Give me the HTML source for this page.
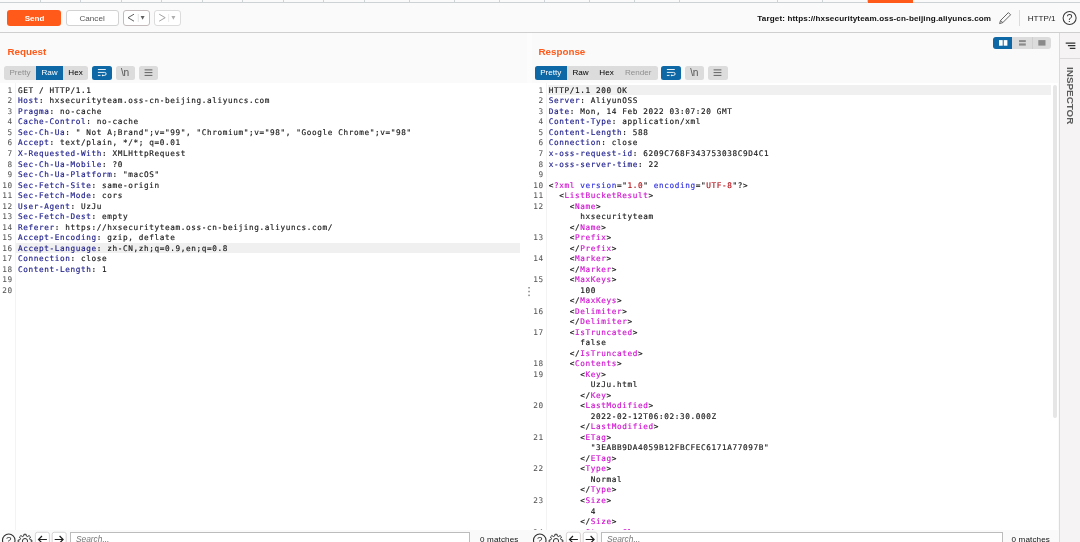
<!DOCTYPE html>
<html lang="en">
<head>
<meta charset="utf-8">
<title>Burp Suite Repeater</title>
<style>
html,body{margin:0;padding:0;}
body{width:1080px;height:542px;overflow:hidden;position:relative;background:#fafafa;font-family:"Liberation Sans",sans-serif;color:#222;}
#root{position:absolute;left:0;top:0;width:1080px;height:542px;will-change:transform;}
.abs{position:absolute;}
#tabstrip{left:0;top:0;width:1080px;height:3px;background:#fafafa;}
#tabstrip .hline{position:absolute;left:0;top:2px;width:1080px;height:1px;background:#cdd3d5;}
#tabstrip .v{position:absolute;top:0;width:1px;height:3px;background:#cfd4d6;}
#tabstrip .sel{position:absolute;left:868px;top:0;width:45px;height:3px;background:#ff5a1a;}
#toolbar{left:0;top:3px;width:1080px;height:30px;background:#fafafa;border-bottom:1px solid #cfcfcf;box-sizing:border-box;}
.btn{position:absolute;top:10.3px;height:15.3px;box-sizing:border-box;border-radius:2.5px;font-size:8.1px;line-height:14px;text-align:center;}
#send{left:7.3px;width:54px;background:#ff5a1a;color:#fff;font-weight:bold;line-height:17.6px;top:10.3px;height:15.3px;border-radius:3px;text-indent:0.5px;}
#cancel{left:65.5px;width:53.2px;top:10.3px;height:15.3px;border-radius:3px;line-height:15px;background:#fff;border:1px solid #d2d2d2;color:#555;}
.nav{background:#fff;border:1px solid #c4bcbc;width:26.7px;border-radius:3px;}
.nav.dis{border-color:#dcdcdc;}
.pane-title{position:absolute;font-weight:bold;font-size:9.8px;color:#ff5a1a;line-height:12px;}
.seg{position:absolute;top:66px;height:13.5px;background:#dcdcdc;border-radius:2.5px;overflow:hidden;font-size:8.1px;line-height:14.3px;color:#000;}
.seg span{position:absolute;top:0;height:13.5px;text-align:center;}
.seg .on{background:#0e68a6;color:#fff;}
.seg .dis{color:#8f8f8f;}
.ib{position:absolute;top:66px;height:13.6px;width:19.5px;border-radius:2.5px;background:#dcdcdc;}
.ib.on{background:#0e68a6;}
.ib svg{position:absolute;left:0;top:0;}
.editor{position:absolute;top:83px;padding-top:1.8px;box-sizing:border-box;background:#fff;overflow:hidden;font-family:"DejaVu Sans Mono","Liberation Mono",monospace;font-size:7.7px;letter-spacing:0.623px;-webkit-text-stroke:0.17px;color:#1a1a1a;}
.editor .gut{position:absolute;left:0;top:0;bottom:0;background:#fff;border-right:1px solid #f3f3f3;box-sizing:border-box;}
.ln{position:relative;height:10.526px;line-height:10.526px;white-space:pre;}
.ln .no{position:absolute;left:0;top:1.1px;text-align:right;color:#585858;-webkit-text-stroke:0.06px;}
.ln .tx{position:absolute;top:1.1px;}
.ln.hl::before{content:"";position:absolute;top:0;bottom:0;right:0;background:#f0f0f0;}
#resp .ln.hl::before{right:7px;}
.h{color:#1c1c8a;}
.t{color:#d012d0;}
.s{color:#b3141c;}
.a{color:#3333e0;}
#req{left:0;width:520px;height:447px;}
#req .gut{width:16px;}
#req .no{width:12.8px;}
#req .tx{left:18px;}
#req .ln.hl::before{left:16px;}
#resp{left:531px;width:527px;height:447px;}
#edbg{left:0;top:83px;width:1058px;height:447px;background:#fff;}
#split{left:527px;top:33px;width:4.5px;height:50px;background:#fcfcfc;}
.dots i{position:absolute;left:528.3px;width:1.5px;height:1.5px;background:#8c8c8c;}
.sb{position:absolute;right:0.6px;top:1.9px;width:4.3px;height:333.5px;border-radius:2.2px;background:#e6e6e6;}
#resp .gut{width:16px;}
#resp .no{width:12.7px;}
#resp .tx{left:17.7px;}
#resp .ln.hl::before{left:16.5px;}
.foot{position:absolute;top:529px;height:13px;}
.search{position:absolute;top:531.5px;height:14px;background:#fff;border:1px solid #bcbcbc;box-sizing:border-box;font-size:8.4px;font-style:italic;color:#787878;line-height:13.5px;padding-left:4.6px;}
.matches{position:absolute;top:534.5px;font-size:8.1px;letter-spacing:0.13px;color:#111;line-height:10px;}
#inspector{left:1059px;top:33px;width:21px;height:509px;background:#f5f3f3;border-left:1px solid #dcdada;box-sizing:border-box;}
</style>
</head>
<body>
<div id="root">
<div id="tabstrip" class="abs">
<div class="hline"></div><div style="position:absolute;left:943px;top:1px;width:137px;height:1px;background:#fafafa"></div>
<i class="v" style="left:40px"></i><i class="v" style="left:80px"></i><i class="v" style="left:121px"></i><i class="v" style="left:161px"></i><i class="v" style="left:202px"></i><i class="v" style="left:242px"></i><i class="v" style="left:283px"></i><i class="v" style="left:323px"></i><i class="v" style="left:364px"></i><i class="v" style="left:409px"></i><i class="v" style="left:454px"></i><i class="v" style="left:499px"></i><i class="v" style="left:544px"></i><i class="v" style="left:589px"></i><i class="v" style="left:634px"></i><i class="v" style="left:679px"></i><i class="v" style="left:777px"></i><i class="v" style="left:822px"></i><i class="v" style="left:867px"></i><i class="v" style="left:912px"></i>
<div class="sel"></div>
</div>
<div id="toolbar" class="abs"></div>
<div class="btn" id="send">Send</div>
<div class="btn" id="cancel">Cancel</div>
<div class="btn nav" style="left:123px"><svg width="27" height="16" viewBox="0 0 27 16" style="position:absolute;left:-1.7px;top:-1.5px"><path d="M12 4.2 L6 7.7 L12 11.2" fill="none" stroke="#606060" stroke-width="1"/><path d="M16.3 4 V12" stroke="#dedede" stroke-width="0.8"/><path d="M18.6 6 H22.6 L20.6 9.8 Z" fill="#606060"/></svg></div>
<div class="btn nav dis" style="left:154px"><svg width="27" height="16" viewBox="0 0 27 16" style="position:absolute;left:-1.7px;top:-1.5px"><path d="M6.2 4.2 L12.2 7.7 L6.2 11.2" fill="none" stroke="#a2a2a2" stroke-width="1"/><path d="M15.6 4 V12" stroke="#e4e4e4" stroke-width="0.8"/><path d="M18.4 6 H22.4 L20.4 9.8 Z" fill="#b0b0b0"/></svg></div>
<div class="abs" style="left:757.3px;top:12.5px;font-size:8.1px;font-weight:bold;color:#111;line-height:12px;white-space:nowrap;letter-spacing:0.135px;">Target: https://hxsecurityteam.oss-cn-beijing.aliyuncs.com</div>
<div class="abs" style="left:1027.7px;top:12.5px;font-size:8.1px;color:#222;line-height:12px;">HTTP/1</div>
<div class="abs" style="left:1019px;top:10px;width:1px;height:15.5px;background:#dcdcdc;"></div>
<svg class="abs" style="left:997px;top:10px" width="16" height="16" viewBox="0 0 16 16"><path d="M2.6 13.6 L3.6 10.4 L11.4 2.6 L13.6 4.8 L5.8 12.6 Z M3.6 10.4 L5.8 12.6" fill="none" stroke="#555" stroke-width="0.9" stroke-linejoin="round"/></svg>
<svg class="abs" style="left:1061px;top:10px" width="17" height="17" viewBox="0 0 17 17"><circle cx="8.6" cy="8" r="6.5" fill="none" stroke="#3a3a3a" stroke-width="1.05"/><text x="8.6" y="11.9" font-family="Liberation Sans, sans-serif" font-size="10.8" text-anchor="middle" fill="#3a3a3a">?</text></svg>

<div class="pane-title" style="left:7.5px;top:45.7px;">Request</div>
<div class="seg" style="left:4px;width:84px;"><span class="dis" style="left:0;width:32px;">Pretty</span><span class="on" style="left:32px;width:27px;">Raw</span><span style="left:59px;width:25px;">Hex</span></div>
<div class="ib on" style="left:92.1px"><svg width="20" height="14" viewBox="0 0 20 14"><path d="M5.9 3.5 H13.8 M5.9 6.4 H12.6 A1.5 1.5 0 0 1 12.6 9.4 H10.2 M5.9 9.4 H8.5" fill="none" stroke="#fff" stroke-width="0.9"/><path d="M11 8.3 L9.7 9.4 L11 10.5 Z" fill="#fff" stroke="none"/></svg></div>
<div class="ib" style="left:115.5px"><span style="position:absolute;left:0;width:19px;top:0;text-align:center;font-size:10.2px;line-height:13.5px;color:#555;letter-spacing:-0.3px">\n</span></div>
<div class="ib" style="left:138.7px"><svg width="20" height="14" viewBox="0 0 20 14"><path d="M5.6 3.9 H13.4 M5.6 6.6 H13.4 M5.6 9.4 H13.4" fill="none" stroke="#555" stroke-width="0.9"/></svg></div>

<div class="pane-title" style="left:538.5px;top:45.7px;">Response</div>
<div class="seg" style="left:534.5px;width:123px;"><span class="on" style="left:0;width:32.5px;">Pretty</span><span style="left:32.5px;width:27px;">Raw</span><span style="left:59.5px;width:25px;">Hex</span><span class="dis" style="left:84.5px;width:38.5px;">Render</span></div>
<div class="ib on" style="left:661.2px"><svg width="20" height="14" viewBox="0 0 20 14"><path d="M5.9 3.5 H13.8 M5.9 6.4 H12.6 A1.5 1.5 0 0 1 12.6 9.4 H10.2 M5.9 9.4 H8.5" fill="none" stroke="#fff" stroke-width="0.9"/><path d="M11 8.3 L9.7 9.4 L11 10.5 Z" fill="#fff" stroke="none"/></svg></div>
<div class="ib" style="left:684.8px"><span style="position:absolute;left:0;width:19px;top:0;text-align:center;font-size:10.2px;line-height:13.5px;color:#555;letter-spacing:-0.3px">\n</span></div>
<div class="ib" style="left:708px"><svg width="20" height="14" viewBox="0 0 20 14"><path d="M5.6 3.9 H13.4 M5.6 6.6 H13.4 M5.6 9.4 H13.4" fill="none" stroke="#555" stroke-width="0.9"/></svg></div>

<div id="edbg" class="abs"></div><div id="split" class="abs"></div>
<svg class="abs" style="left:525px;top:284px" width="8" height="16" viewBox="0 0 8 16"><g fill="#858585"><rect x="3.3" y="3" width="1.5" height="1.5"/><rect x="3.3" y="6.8" width="1.5" height="1.5"/><rect x="3.3" y="10.6" width="1.5" height="1.5"/></g></svg>
<div class="editor" id="req"><div class="gut"></div>
<div class="ln"><span class="no">1</span><span class="tx">GET / HTTP/1.1</span></div>
<div class="ln"><span class="no">2</span><span class="tx"><span class="h">Host</span>: hxsecurityteam.oss-cn-beijing.aliyuncs.com</span></div>
<div class="ln"><span class="no">3</span><span class="tx"><span class="h">Pragma</span>: no-cache</span></div>
<div class="ln"><span class="no">4</span><span class="tx"><span class="h">Cache-Control</span>: no-cache</span></div>
<div class="ln"><span class="no">5</span><span class="tx"><span class="h">Sec-Ch-Ua</span>: " Not A;Brand";v="99", "Chromium";v="98", "Google Chrome";v="98"</span></div>
<div class="ln"><span class="no">6</span><span class="tx"><span class="h">Accept</span>: text/plain, */*; q=0.01</span></div>
<div class="ln"><span class="no">7</span><span class="tx"><span class="h">X-Requested-With</span>: XMLHttpRequest</span></div>
<div class="ln"><span class="no">8</span><span class="tx"><span class="h">Sec-Ch-Ua-Mobile</span>: ?0</span></div>
<div class="ln"><span class="no">9</span><span class="tx"><span class="h">Sec-Ch-Ua-Platform</span>: "macOS"</span></div>
<div class="ln"><span class="no">10</span><span class="tx"><span class="h">Sec-Fetch-Site</span>: same-origin</span></div>
<div class="ln"><span class="no">11</span><span class="tx"><span class="h">Sec-Fetch-Mode</span>: cors</span></div>
<div class="ln"><span class="no">12</span><span class="tx"><span class="h">User-Agent</span>: UzJu</span></div>
<div class="ln"><span class="no">13</span><span class="tx"><span class="h">Sec-Fetch-Dest</span>: empty</span></div>
<div class="ln"><span class="no">14</span><span class="tx"><span class="h">Referer</span>: https://hxsecurityteam.oss-cn-beijing.aliyuncs.com/</span></div>
<div class="ln"><span class="no">15</span><span class="tx"><span class="h">Accept-Encoding</span>: gzip, deflate</span></div>
<div class="ln hl"><span class="no">16</span><span class="tx"><span class="h">Accept-Language</span>: zh-CN,zh;q=0.9,en;q=0.8</span></div>
<div class="ln"><span class="no">17</span><span class="tx"><span class="h">Connection</span>: close</span></div>
<div class="ln"><span class="no">18</span><span class="tx"><span class="h">Content-Length</span>: 1</span></div>
<div class="ln"><span class="no">19</span><span class="tx"></span></div>
<div class="ln"><span class="no">20</span><span class="tx"></span></div>
</div>
<div class="editor" id="resp"><div class="gut"></div><div class="sb"></div>
<div class="ln hl"><span class="no">1</span><span class="tx">HTTP/1.1 200 OK</span></div>
<div class="ln"><span class="no">2</span><span class="tx"><span class="h">Server</span>: AliyunOSS</span></div>
<div class="ln"><span class="no">3</span><span class="tx"><span class="h">Date</span>: Mon, 14 Feb 2022 03:07:20 GMT</span></div>
<div class="ln"><span class="no">4</span><span class="tx"><span class="h">Content-Type</span>: application/xml</span></div>
<div class="ln"><span class="no">5</span><span class="tx"><span class="h">Content-Length</span>: 588</span></div>
<div class="ln"><span class="no">6</span><span class="tx"><span class="h">Connection</span>: close</span></div>
<div class="ln"><span class="no">7</span><span class="tx"><span class="h">x-oss-request-id</span>: 6209C768F343753038C9D4C1</span></div>
<div class="ln"><span class="no">8</span><span class="tx"><span class="h">x-oss-server-time</span>: 22</span></div>
<div class="ln"><span class="no">9</span><span class="tx"></span></div>
<div class="ln"><span class="no">10</span><span class="tx">&lt;<span class="t">?xml</span> <span class="a">version</span>="<span class="s">1.0</span>" <span class="a">encoding</span>="<span class="s">UTF-8</span>"?&gt;</span></div>
<div class="ln"><span class="no">11</span><span class="tx">  &lt;<span class="t">ListBucketResult</span>&gt;</span></div>
<div class="ln"><span class="no">12</span><span class="tx">    &lt;<span class="t">Name</span>&gt;</span></div>
<div class="ln"><span class="no"></span><span class="tx">      hxsecurityteam</span></div>
<div class="ln"><span class="no"></span><span class="tx">    &lt;/<span class="t">Name</span>&gt;</span></div>
<div class="ln"><span class="no">13</span><span class="tx">    &lt;<span class="t">Prefix</span>&gt;</span></div>
<div class="ln"><span class="no"></span><span class="tx">    &lt;/<span class="t">Prefix</span>&gt;</span></div>
<div class="ln"><span class="no">14</span><span class="tx">    &lt;<span class="t">Marker</span>&gt;</span></div>
<div class="ln"><span class="no"></span><span class="tx">    &lt;/<span class="t">Marker</span>&gt;</span></div>
<div class="ln"><span class="no">15</span><span class="tx">    &lt;<span class="t">MaxKeys</span>&gt;</span></div>
<div class="ln"><span class="no"></span><span class="tx">      100</span></div>
<div class="ln"><span class="no"></span><span class="tx">    &lt;/<span class="t">MaxKeys</span>&gt;</span></div>
<div class="ln"><span class="no">16</span><span class="tx">    &lt;<span class="t">Delimiter</span>&gt;</span></div>
<div class="ln"><span class="no"></span><span class="tx">    &lt;/<span class="t">Delimiter</span>&gt;</span></div>
<div class="ln"><span class="no">17</span><span class="tx">    &lt;<span class="t">IsTruncated</span>&gt;</span></div>
<div class="ln"><span class="no"></span><span class="tx">      false</span></div>
<div class="ln"><span class="no"></span><span class="tx">    &lt;/<span class="t">IsTruncated</span>&gt;</span></div>
<div class="ln"><span class="no">18</span><span class="tx">    &lt;<span class="t">Contents</span>&gt;</span></div>
<div class="ln"><span class="no">19</span><span class="tx">      &lt;<span class="t">Key</span>&gt;</span></div>
<div class="ln"><span class="no"></span><span class="tx">        UzJu.html</span></div>
<div class="ln"><span class="no"></span><span class="tx">      &lt;/<span class="t">Key</span>&gt;</span></div>
<div class="ln"><span class="no">20</span><span class="tx">      &lt;<span class="t">LastModified</span>&gt;</span></div>
<div class="ln"><span class="no"></span><span class="tx">        2022-02-12T06:02:30.000Z</span></div>
<div class="ln"><span class="no"></span><span class="tx">      &lt;/<span class="t">LastModified</span>&gt;</span></div>
<div class="ln"><span class="no">21</span><span class="tx">      &lt;<span class="t">ETag</span>&gt;</span></div>
<div class="ln"><span class="no"></span><span class="tx">        "3EABB9DA4059B12FBCFEC6171A77097B"</span></div>
<div class="ln"><span class="no"></span><span class="tx">      &lt;/<span class="t">ETag</span>&gt;</span></div>
<div class="ln"><span class="no">22</span><span class="tx">      &lt;<span class="t">Type</span>&gt;</span></div>
<div class="ln"><span class="no"></span><span class="tx">        Normal</span></div>
<div class="ln"><span class="no"></span><span class="tx">      &lt;/<span class="t">Type</span>&gt;</span></div>
<div class="ln"><span class="no">23</span><span class="tx">      &lt;<span class="t">Size</span>&gt;</span></div>
<div class="ln"><span class="no"></span><span class="tx">        4</span></div>
<div class="ln"><span class="no"></span><span class="tx">      &lt;/<span class="t">Size</span>&gt;</span></div>
<div class="ln"><span class="no">24</span><span class="tx">      &lt;<span class="t">StorageClass</span>&gt;</span></div>
<div class="ln"><span class="no"></span><span class="tx">        Standard</span></div>
</div>

<svg class="abs" style="left:0px;top:530px" width="70" height="12" viewBox="0 0 70 12">
<circle cx="8.75" cy="10.2" r="6.25" fill="none" stroke="#2e2e2e" stroke-width="1.1"/>
<text x="8.75" y="13.4" font-family="Liberation Sans, sans-serif" font-size="9.9" text-anchor="middle" fill="#2e2e2e">?</text>
<g transform="translate(0 0.8)"><path d="M23.72 5.16 L23.92 3.48 L26.08 3.48 L26.28 5.16 L27.73 5.76 L29.06 4.72 L30.58 6.24 L29.54 7.57 L30.14 9.02 L31.82 9.22 L31.82 11.38 L30.14 11.58 L29.54 13.03 L30.58 14.36 L29.06 15.88 L27.73 14.84 L26.28 15.44 L26.08 17.12 L23.92 17.12 L23.72 15.44 L22.27 14.84 L20.94 15.88 L19.42 14.36 L20.46 13.03 L19.86 11.58 L18.18 11.38 L18.18 9.22 L19.86 9.02 L20.46 7.57 L19.42 6.24 L20.94 4.72 L22.27 5.76 Z" fill="none" stroke="#2e2e2e" stroke-width="1" stroke-linejoin="round"/><circle cx="25" cy="10.3" r="2.6" fill="none" stroke="#2e2e2e" stroke-width="1"/></g>
<rect x="35.4" y="2.3" width="14" height="14" rx="2" fill="#fff" stroke="#c4c0c0" stroke-width="0.7"/>
<rect x="52.2" y="2.3" width="14" height="14" rx="2" fill="#fff" stroke="#c4c0c0" stroke-width="0.7"/>
<path d="M46.9 9.5 H38.6 M42 6 L38.5 9.5 L42 13" fill="none" stroke="#1e1e1e" stroke-width="1.2"/>
<path d="M54.7 9.5 H63 M59.6 6 L63.1 9.5 L59.6 13" fill="none" stroke="#1e1e1e" stroke-width="1.2"/>
</svg>
<div class="search" style="left:70.3px;width:400.2px;">Search...</div>
<div class="matches" style="left:480px;">0 matches</div>
<svg class="abs" style="left:531.2px;top:530px" width="70" height="12" viewBox="0 0 70 12">
<circle cx="8.75" cy="10.2" r="6.25" fill="none" stroke="#2e2e2e" stroke-width="1.1"/>
<text x="8.75" y="13.4" font-family="Liberation Sans, sans-serif" font-size="9.9" text-anchor="middle" fill="#2e2e2e">?</text>
<g transform="translate(0 0.8)"><path d="M23.72 5.16 L23.92 3.48 L26.08 3.48 L26.28 5.16 L27.73 5.76 L29.06 4.72 L30.58 6.24 L29.54 7.57 L30.14 9.02 L31.82 9.22 L31.82 11.38 L30.14 11.58 L29.54 13.03 L30.58 14.36 L29.06 15.88 L27.73 14.84 L26.28 15.44 L26.08 17.12 L23.92 17.12 L23.72 15.44 L22.27 14.84 L20.94 15.88 L19.42 14.36 L20.46 13.03 L19.86 11.58 L18.18 11.38 L18.18 9.22 L19.86 9.02 L20.46 7.57 L19.42 6.24 L20.94 4.72 L22.27 5.76 Z" fill="none" stroke="#2e2e2e" stroke-width="1" stroke-linejoin="round"/><circle cx="25" cy="10.3" r="2.6" fill="none" stroke="#2e2e2e" stroke-width="1"/></g>
<rect x="35.4" y="2.3" width="14" height="14" rx="2" fill="#fff" stroke="#c4c0c0" stroke-width="0.7"/>
<rect x="52.2" y="2.3" width="14" height="14" rx="2" fill="#fff" stroke="#c4c0c0" stroke-width="0.7"/>
<path d="M46.9 9.5 H38.6 M42 6 L38.5 9.5 L42 13" fill="none" stroke="#1e1e1e" stroke-width="1.2"/>
<path d="M54.7 9.5 H63 M59.6 6 L63.1 9.5 L59.6 13" fill="none" stroke="#1e1e1e" stroke-width="1.2"/>
</svg>
<div class="search" style="left:601.3px;width:401.8px;">Search...</div>
<div class="matches" style="left:1011.5px;">0 matches</div>

<div class="abs" style="left:992.8px;top:37px;width:58.6px;height:12px;border-radius:3px;background:#dcdcdc;overflow:hidden;">
<div style="position:absolute;left:0;top:0;width:19.4px;height:12px;background:#0e68a6;"></div>
<div style="position:absolute;left:38.9px;top:0;width:0.6px;height:12px;background:#cfcfcf;"></div>
<svg style="position:absolute;left:0;top:0" width="59" height="12" viewBox="0 0 59 12"><rect x="6" y="3.1" width="3.7" height="5.6" fill="#fff"/><rect x="10.7" y="3.1" width="3.7" height="5.6" fill="#fff"/><rect x="26" y="3.1" width="6.8" height="2" fill="#8a8a8a"/><rect x="26" y="6.4" width="6.8" height="2.2" fill="#8a8a8a"/><rect x="45.3" y="3.1" width="7.2" height="5.5" fill="#8a8a8a"/></svg>
</div>
<div id="inspector" class="abs">
<div style="position:absolute;left:0;top:25px;width:21px;height:1px;background:#dcdada;"></div>
<svg style="position:absolute;left:0;top:0" width="21" height="26" viewBox="0 0 21 26"><path d="M5.7 10.2 H15.35 M7.9 12.7 H15.35 M9.8 15.4 H15.4" stroke="#333" stroke-width="1.3" fill="none"/></svg>
<div style="position:absolute;left:4.1px;top:33.7px;width:12px;height:58px;writing-mode:vertical-rl;font-size:9.9px;font-weight:bold;color:#5a5a5a;line-height:12px;white-space:nowrap;">INSPECTOR</div>
</div>
</div>
</body>
</html>
